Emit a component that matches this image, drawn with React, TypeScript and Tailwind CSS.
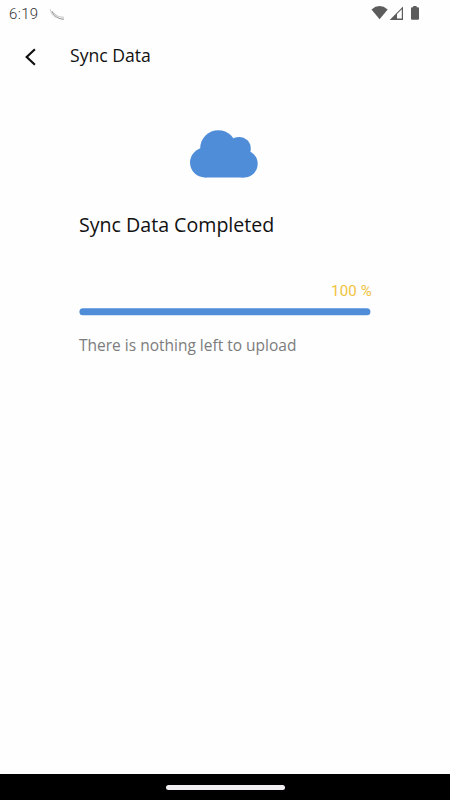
export default function App() {
  return (
    <div className="flex h-[800px] w-[450px] flex-col overflow-hidden bg-[#fefefe] font-['Open_Sans',sans-serif]">
      <header className="flex h-7 items-center justify-between pl-[9px] pr-[30px] text-[#333]">
        <div className="flex items-center gap-[10px]">
          <span className="font-['Roboto',sans-serif] text-[15px] font-light leading-7 tracking-[0.35px]">6:19</span>
          <svg className="h-3 w-4" viewBox="0 0 16 12" fill="none" strokeLinecap="round">
            <path d="M3 3.5C4.5 7.5 8.5 11 14.5 11.2" stroke="#888" strokeWidth="1" />
            <path d="M4.5 4.5C6.5 7.5 9.5 9.2 14.5 9.3" stroke="#aaa" strokeWidth=".7" />
            <path d="M1.2 1.5C1.7 4.5 3 7 6 9.5" stroke="#bbb" strokeWidth=".7" />
          </svg>
        </div>
        <svg className="h-4 w-[50px]" viewBox="0 0 50 16" fill="#5c5c5c">
          <path d="M1.5 3.5Q9.5-3.3 17.7 3.5L9.6 13.3Z" />
          <path fillRule="evenodd" d="M19.7 13.9L33 .4V13.9ZM27 8V12.6H31.8V3.3Z" />
          <path d="M41 2.2q0-1 1-1h1.2V0h3.4v1.2H48q1 0 1 1v10.6q0 1-1 1h-6q-1 0-1-1Z" />
        </svg>
      </header>
      <nav className="flex h-14 items-center pl-6">
        <svg className="mt-[2px] h-[18px] w-3" viewBox="0 0 12 18" fill="none" stroke="#111" strokeWidth="2.2">
          <path d="M10.9 1.2L2.7 9l8.2 7.8" />
        </svg>
        <h1 className="-mt-[2px] ml-[34px] text-[17.6px] font-normal leading-6 text-[#111]">Sync Data</h1>
      </nav>
      <main className="flex flex-1 flex-col px-[79px] pt-[46px]">
        <svg className="ml-[111px] h-12 w-[68px]" viewBox="0 0 68 48" fill="#508dd8">
          <circle cx="28.3" cy="18.3" r="18.1" />
          <circle cx="49" cy="18.7" r="11.8" />
          <circle cx="14.8" cy="32.6" r="14.8" />
          <circle cx="54.1" cy="33.8" r="13.6" />
          <path d="M14.8 20H54.1V47.4H14.8Z" />
        </svg>
        <h2 className="mt-[33px] text-[19.6px] font-normal leading-[28px] text-[#111]">Sync Data Completed</h2>
        <p className="-mr-[1px] mt-[42px] self-end font-['Roboto',sans-serif] text-[15px] font-normal leading-5 tracking-[0.2px] text-[#f0c23c]">100 %</p>
        <div className="mt-[7px] h-[7px] w-[291px] translate-x-[0.4px] translate-y-[0.3px] rounded-full bg-[#508dd8]" />
        <p className="mt-5 whitespace-nowrap text-[15.5px] font-normal leading-5 text-[#7c7c7c]">There is nothing left to upload</p>
      </main>
      <footer className="flex h-[26px] items-center justify-center bg-black">
        <div className="h-[5px] w-[119px] rounded-full bg-[#f2eff3]" />
      </footer>
    </div>
  );
}
